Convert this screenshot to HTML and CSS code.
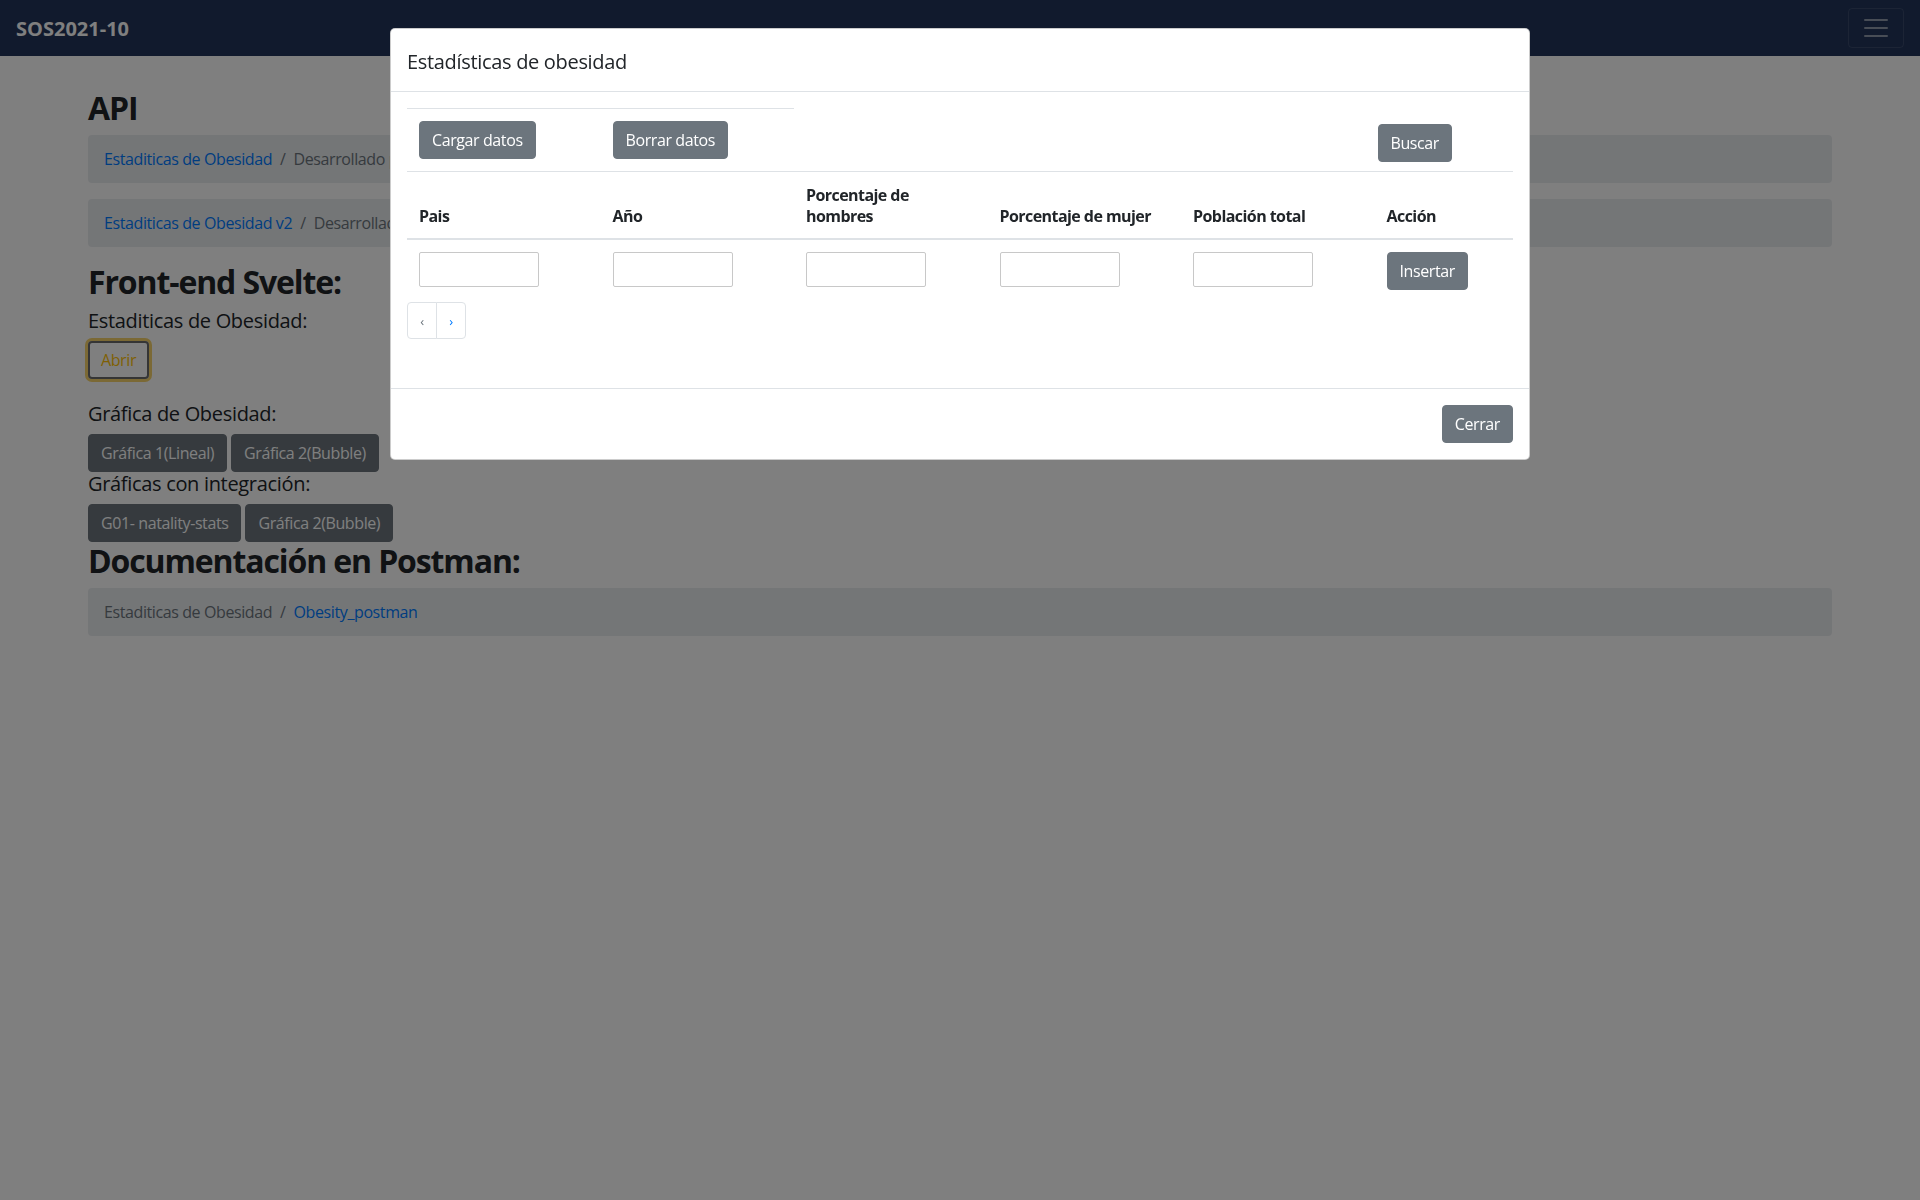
FILE: index.html
```html
<!DOCTYPE html>
<html lang="es">
<head>
<meta charset="utf-8">
<title>SOS2021-10</title>
<link rel="stylesheet" href="styles.css">
</head>
<body>
<nav class="navbar">
  <span class="brand">SOS2021-10</span>
  <button class="toggler" aria-label="Menú">
    <svg viewBox="0 0 30 30"><path d="M4 7h22M4 15h22M4 23h22" stroke="rgba(255,255,255,0.5)" stroke-width="2" stroke-linecap="round" fill="none"/></svg>
  </button>
</nav>

<main class="page">
  <h1 class="heading">API</h1>
  <ol class="crumbs">
    <li><a href="#">Estaditicas de Obesidad</a></li>
    <li class="sep">/</li>
    <li class="active">Desarrollado por</li>
  </ol>
  <ol class="crumbs">
    <li><a href="#">Estaditicas de Obesidad v2</a></li>
    <li class="sep">/</li>
    <li class="active">Desarrollado</li>
  </ol>

  <h1 class="heading">Front-end Svelte:</h1>
  <h5 class="sub">Estaditicas de Obesidad:</h5>
  <div class="btn-row btn-row-gap"><button class="btn btn-outline-warning is-focused">Abrir</button></div>

  <h5 class="sub">Gráfica de Obesidad:</h5>
  <div class="btn-row">
    <button class="btn btn-secondary">Gráfica 1(Lineal)</button>
    <button class="btn btn-secondary">Gráfica 2(Bubble)</button>
  </div>
  <h5 class="sub">Gráficas con integración:</h5>
  <div class="btn-row">
    <button class="btn btn-secondary">G01- natality-stats</button>
    <button class="btn btn-secondary">Gráfica 2(Bubble)</button>
  </div>

  <h1 class="heading">Documentación en Postman:</h1>
  <ol class="crumbs">
    <li class="active">Estaditicas de Obesidad</li>
    <li class="sep">/</li>
    <li><a href="#">Obesity_postman</a></li>
  </ol>
</main>

<div class="backdrop"></div>

<div class="modal-wrap">
  <div class="modal-dialog">
    <div class="modal-content">
      <div class="modal-header">
        <h5 class="modal-title">Estadísticas de obesidad</h5>
      </div>
      <div class="modal-body">
        <div class="tbl">
          <div class="cell cell-top"><button class="btn btn-secondary">Cargar datos</button></div>
          <div class="cell cell-top"><button class="btn btn-secondary">Borrar datos</button></div>
          <div class="cell"></div>
          <div class="cell"></div>
          <div class="cell"></div>
          <div class="cell cell-search"><button class="btn btn-secondary">Buscar</button></div>

          <div class="th"><span>Pais</span></div>
          <div class="th"><span>Año</span></div>
          <div class="th"><span>Porcentaje de<br>hombres</span></div>
          <div class="th"><span>Porcentaje de mujer</span></div>
          <div class="th"><span>Población total</span></div>
          <div class="th"><span>Acción</span></div>

          <div class="td"><input class="inp" type="text"></div>
          <div class="td"><input class="inp" type="text"></div>
          <div class="td"><input class="inp" type="text"></div>
          <div class="td"><input class="inp" type="text"></div>
          <div class="td"><input class="inp" type="text"></div>
          <div class="td"><button class="btn btn-secondary">Insertar</button></div>
        </div>
        <ul class="pager">
          <li class="page-item"><a class="page-link disabled" href="#">‹</a></li>
          <li class="page-item"><a class="page-link" href="#">›</a></li>
        </ul>
      </div>
      <div class="modal-footer">
        <button class="btn btn-secondary">Cerrar</button>
      </div>
    </div>
  </div>
</div>
</body>
</html>
```

FILE: styles.css
```css
* { box-sizing: border-box; }

html, body { margin: 0; padding: 0; }

body {
  font-family: "Open Sans", "Noto Sans", "DejaVu Sans", sans-serif;
  font-size: 16px;
  line-height: 24px;
  color: #212529;
  background: #ffffff;
  letter-spacing: -0.02em;
}

a { color: #007bff; text-decoration: none; }

/* ---------- navbar ---------- */
.navbar {
  height: 56px;
  background: #22345a;
  display: flex;
  align-items: center;
  justify-content: space-between;
  padding: 0 16px;
}
.brand {
  color: #ffffff;
  font-weight: 700;
  font-size: 20px;
  line-height: 30px;
  padding-top: 2px;
  letter-spacing: 0;
}
.toggler {
  width: 56px;
  height: 40px;
  padding: 0;
  background: transparent;
  border: 1px solid rgba(255, 255, 255, 0.1);
  border-radius: 4px;
  display: flex;
  align-items: center;
  justify-content: center;
}
.toggler svg { width: 30px; height: 30px; display: block; }

/* ---------- page ---------- */
.page { padding: 33px 88px 0; }

.heading {
  margin: 0 0 8px;
  font-size: 32px;
  line-height: 38px;
  font-weight: 700;
  letter-spacing: -0.035em;
}
.sub {
  margin: 0 0 8px;
  font-size: 20px;
  line-height: 24px;
  font-weight: 500;
}

.crumbs {
  list-style: none;
  margin: 0 0 16px;
  padding: 12px 16px;
  background: #e9ecef;
  border-radius: 4px;
  display: flex;
  letter-spacing: -0.025em;
}
.crumbs li { line-height: 24px; }
.crumbs .sep { color: #6c757d; padding: 0 8px; }
.crumbs .active { color: #6c757d; }

.btn-row { display: flex; gap: 4px; }
.btn-row-gap { margin-bottom: 23px; }

.btn {
  font-family: inherit;
  font-size: 16px;
  line-height: 24px;
  letter-spacing: -0.025em;
  padding: 6px 12px;
  border: 1px solid transparent;
  border-radius: 4px;
  cursor: pointer;
}
.btn-secondary {
  background: #6c757d;
  border-color: #6c757d;
  color: #ffffff;
}
.btn-outline-warning {
  background: transparent;
  color: #ffc107;
  border: 2px solid #6a6a6a;
  padding: 5px 11px;
}
.is-focused { box-shadow: 0 0 0 3px #f6d36a; }

/* ---------- modal ---------- */
.backdrop {
  position: fixed;
  inset: 0;
  background: rgba(0, 0, 0, 0.5);
  z-index: 10;
}
.modal-wrap {
  position: fixed;
  inset: 0;
  z-index: 11;
}
.modal-dialog {
  width: 1140px;
  margin: 28px auto 0;
}
.modal-content {
  background: #ffffff;
  border: 1px solid rgba(0, 0, 0, 0.2);
  border-radius: 5px;
}
.modal-header {
  padding: 18px 16px 14px;
  border-bottom: 1px solid #dee2e6;
}
.modal-title {
  margin: 0;
  font-size: 20px;
  line-height: 30px;
  font-weight: 500;
}
.modal-body { padding: 16px; }

.tbl {
  display: grid;
  grid-template-columns: repeat(5, 193.5px) 1fr;
}
.cell { padding: 12px; }
.cell-top { border-top: 1px solid #dee2e6; }
.cell-search { padding: 16px 12px 0 3px; }

.th {
  padding: 13px 12px 11px;
  border-top: 1px solid #dee2e6;
  border-bottom: 2px solid #dee2e6;
  font-weight: 700;
  line-height: 21px;
  letter-spacing: -0.035em;
  display: flex;
  align-items: flex-end;
}
.td { padding: 12px; }

.inp {
  display: block;
  width: 120px;
  height: 35px;
  margin: 0;
  border: 1px solid #c8c8c8;
  border-radius: 2px;
  background: #ffffff;
}

.pager {
  list-style: none;
  margin: 0 0 33px;
  padding: 0;
  display: flex;
}
.page-link {
  display: flex;
  align-items: center;
  justify-content: center;
  width: 30px;
  height: 37px;
  font-size: 13px;
  color: #007bff;
  border: 1px solid #dee2e6;
  background: #ffffff;
}
.page-item:first-child .page-link { border-radius: 4px 0 0 4px; }
.page-item:last-child .page-link { border-radius: 0 4px 4px 0; margin-left: -1px; }
.page-link.disabled { color: #6c757d; }

.modal-footer {
  padding: 16px;
  border-top: 1px solid #dee2e6;
  display: flex;
  justify-content: flex-end;
}
```
